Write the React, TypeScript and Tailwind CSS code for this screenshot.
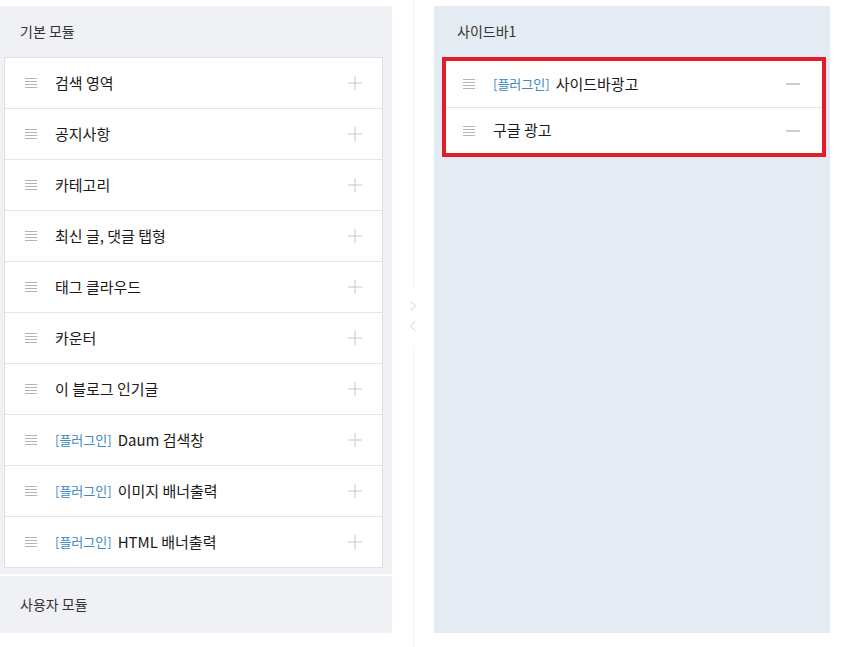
import React from 'react';

const font = { fontFamily: '"Noto Sans CJK KR", "Noto Sans", sans-serif' };

const basicModules = [
  { name: '검색 영역' },
  { name: '공지사항' },
  { name: '카테고리' },
  { name: '최신 글, 댓글 탭형' },
  { name: '태그 클라우드' },
  { name: '카운터' },
  { name: '이 블로그 인기글' },
  { name: 'Daum 검색창', plugin: true },
  { name: '이미지 배너출력', plugin: true },
  { name: 'HTML 배너출력', plugin: true },
];

const sidebarModules = [
  { name: '사이드바광고', plugin: true },
  { name: '구글 광고' },
];

function DragIcon() {
  return (
    <svg width="12" height="10" viewBox="0 0 12 10" className="shrink-0">
      <path d="M0 0.5h12M0 3.5h12M0 6.5h12M0 9.5h12" stroke="#b4b4b4" strokeWidth="1" />
    </svg>
  );
}

function PlusIcon() {
  return (
    <svg width="14" height="14" viewBox="0 0 14 14" className="shrink-0">
      <path d="M7 0v14M0 7h14" stroke="#c6c6c6" strokeWidth="1" />
    </svg>
  );
}

function MinusIcon() {
  return (
    <svg width="14" height="14" viewBox="0 0 14 14" className="shrink-0">
      <path d="M0 7h14" stroke="#9a9a9a" strokeWidth="1" />
    </svg>
  );
}

function Label({ name, plugin }: { name: string; plugin?: boolean }) {
  return (
    <span className="flex items-center text-[15px] text-[#1a1a1a]">
      {plugin && <span className="mr-[6px] text-[13px] text-[#3b8ac2]">[플러그인]</span>}
      {name}
    </span>
  );
}

export default function App() {
  return (
    <div className="flex w-[841px] h-[647px] bg-white" style={font}>
      {/* left column */}
      <div className="flex flex-col w-[392px] pt-[6px]">
        <section className="bg-[#eff1f5] pb-[6px]">
          <h3 className="h-[51px] flex items-center pl-[20px] text-[14px] text-[#333]">기본 모듈</h3>
          <ul className="ml-[4px] mr-[9px] border border-[#dde1e7] bg-white">
            {basicModules.map((m, i) => (
              <li
                key={m.name}
                className={`flex items-center pl-[20px] pr-[20px] ${i > 0 ? 'h-[51px] border-t border-[#e3e6eb]' : 'h-[50px]'}`}
              >
                <DragIcon />
                <div className="ml-[18px] flex-1">
                  <Label name={m.name} plugin={m.plugin} />
                </div>
                <PlusIcon />
              </li>
            ))}
          </ul>
        </section>
        <section className="mt-[2px] h-[57px] bg-[#eff1f5] flex items-center pl-[20px]">
          <h3 className="text-[14px] text-[#333]">사용자 모듈</h3>
        </section>
      </div>

      {/* divider */}
      <div className="w-[42px] flex flex-col items-center">
        <div className="w-px h-[290px] bg-[#f2f3f5]" />
        <div className="flex flex-col items-center gap-[8px] pt-[10px] pb-[15px]">
          <svg width="8" height="12" viewBox="0 0 8 12">
            <path d="M1.5 1l5 5-5 5" fill="none" stroke="#d4d4d4" strokeWidth="1" />
          </svg>
          <svg width="8" height="12" viewBox="0 0 8 12">
            <path d="M6.5 1l-5 5 5 5" fill="none" stroke="#d4d4d4" strokeWidth="1" />
          </svg>
        </div>
        <div className="w-px flex-1 bg-[#f2f3f5]" />
      </div>

      {/* right column */}
      <div className="pt-[6px] pb-[14px]">
        <section className="w-[396px] h-full bg-[#e5ebf2]">
          <h3 className="h-[51px] flex items-center pl-[23px] text-[14px] text-[#333]">사이드바1</h3>
          <ul className="ml-[8px] mr-[4px] border-4 border-[#e31d25] bg-white">
            {sidebarModules.map((m, i) => (
              <li
                key={m.name}
                className={`flex items-center h-[46px] pl-[17px] pr-[22px] ${i > 0 ? 'border-t border-[#e3e6eb]' : ''}`}
              >
                <DragIcon />
                <div className="ml-[18px] flex-1">
                  <Label name={m.name} plugin={m.plugin} />
                </div>
                <MinusIcon />
              </li>
            ))}
          </ul>
        </section>
      </div>
    </div>
  );
}
